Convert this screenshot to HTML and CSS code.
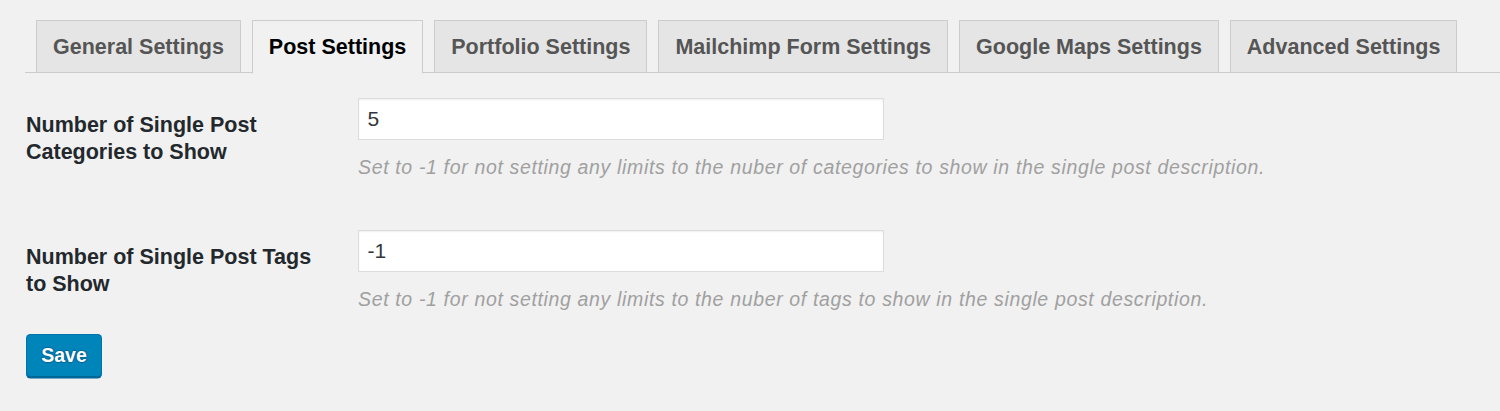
FILE: index.html
```html
<!DOCTYPE html>
<html>
<head>
<meta charset="utf-8">
<link rel="stylesheet" href="styles.css">
</head>
<body>
<div class="page">
  <nav class="tabs">
    <a class="tab">General Settings</a>
    <a class="tab active">Post Settings</a>
    <a class="tab">Portfolio Settings</a>
    <a class="tab">Mailchimp Form Settings</a>
    <a class="tab">Google Maps Settings</a>
    <a class="tab">Advanced Settings</a>
  </nav>
  <form class="form">
    <div class="row">
      <label class="label">Number of Single Post Categories to Show</label>
      <div class="field">
        <input class="input" type="text" value="5">
        <p class="desc">Set to -1 for not setting any limits to the nuber of categories to show in the single post description.</p>
      </div>
    </div>
    <div class="row">
      <label class="label">Number of Single Post Tags to Show</label>
      <div class="field">
        <input class="input" type="text" value="-1">
        <p class="desc">Set to -1 for not setting any limits to the nuber of tags to show in the single post description.</p>
      </div>
    </div>
    <div class="actions">
      <button class="button" type="button">Save</button>
    </div>
  </form>
</div>
</body>
</html>
```
FILE: styles.css
```css
html, body {
  margin: 0;
  padding: 0;
  background: #f1f1f1;
}
body {
  font-family: "Liberation Sans", Arial, sans-serif;
  color: #23282d;
  width: 1500px;
  height: 411px;
  overflow: hidden;
}
.page {
  padding-left: 25px;
}
.tabs {
  display: flex;
  padding-top: 20px;
  border-bottom: 1.5px solid #cccccc;
  height: 52px;
  box-sizing: content-box;
}
.tab {
  display: block;
  margin-left: 11px;
  padding: 0 16px;
  height: 52px;
  box-sizing: border-box;
  border: 1.5px solid #cccccc;
  border-bottom: none;
  background: #e5e5e5;
  color: #555555;
  font-weight: bold;
  font-size: 21.5px;
  line-height: 52px;
  white-space: nowrap;
  margin-bottom: -1.5px;
}
.tab.active {
  background: #f1f1f1;
  color: #000000;
  height: 53.5px;
  border-bottom: 1.5px solid #f1f1f1;
}
.form {
  padding-left: 1px;
}
.row {
  display: flex;
  padding-top: 25px;
  height: 132px;
  box-sizing: border-box;
}
.row + .row {
  height: 129px;
}
.label {
  width: 300px;
  margin-right: 32px;
  margin-top: 13.5px;
  font-weight: bold;
  font-size: 21.5px;
  line-height: 27px;
  color: #23282d;
}
.field {
  display: flex;
  flex-direction: column;
}
.input {
  width: 526px;
  height: 42px;
  box-sizing: border-box;
  border: 1.5px solid #dddddd;
  box-shadow: inset 0 1px 2px rgba(0,0,0,0.07);
  background: #ffffff;
  padding: 0 0 0 8.5px;
  margin: 0;
  font-family: "Liberation Sans", Arial, sans-serif;
  font-size: 21px;
  color: #32373c;
  outline: none;
}
.desc {
  margin: 12.5px 0 0;
  font-style: italic;
  font-size: 19.5px;
  letter-spacing: 0.65px;
  line-height: 29px;
  color: #a0a0a0;
  white-space: nowrap;
}
.actions {
  padding-top: 0;
}
.button {
  display: block;
  width: 76px;
  height: 43px;
  box-sizing: border-box;
  margin: 0;
  padding: 0;
  background: #0085ba;
  border: 1.5px solid #0073aa;
  border-bottom-color: #006799;
  border-radius: 4.5px;
  box-shadow: 0 1.5px 0 #006799;
  color: #ffffff;
  font-family: "Liberation Sans", Arial, sans-serif;
  font-size: 19.5px;
  font-weight: bold;
  text-shadow: 0 -1px 1px #006799, 1px 0 1px #006799, 0 1px 1px #006799, -1px 0 1px #006799;
}
```
